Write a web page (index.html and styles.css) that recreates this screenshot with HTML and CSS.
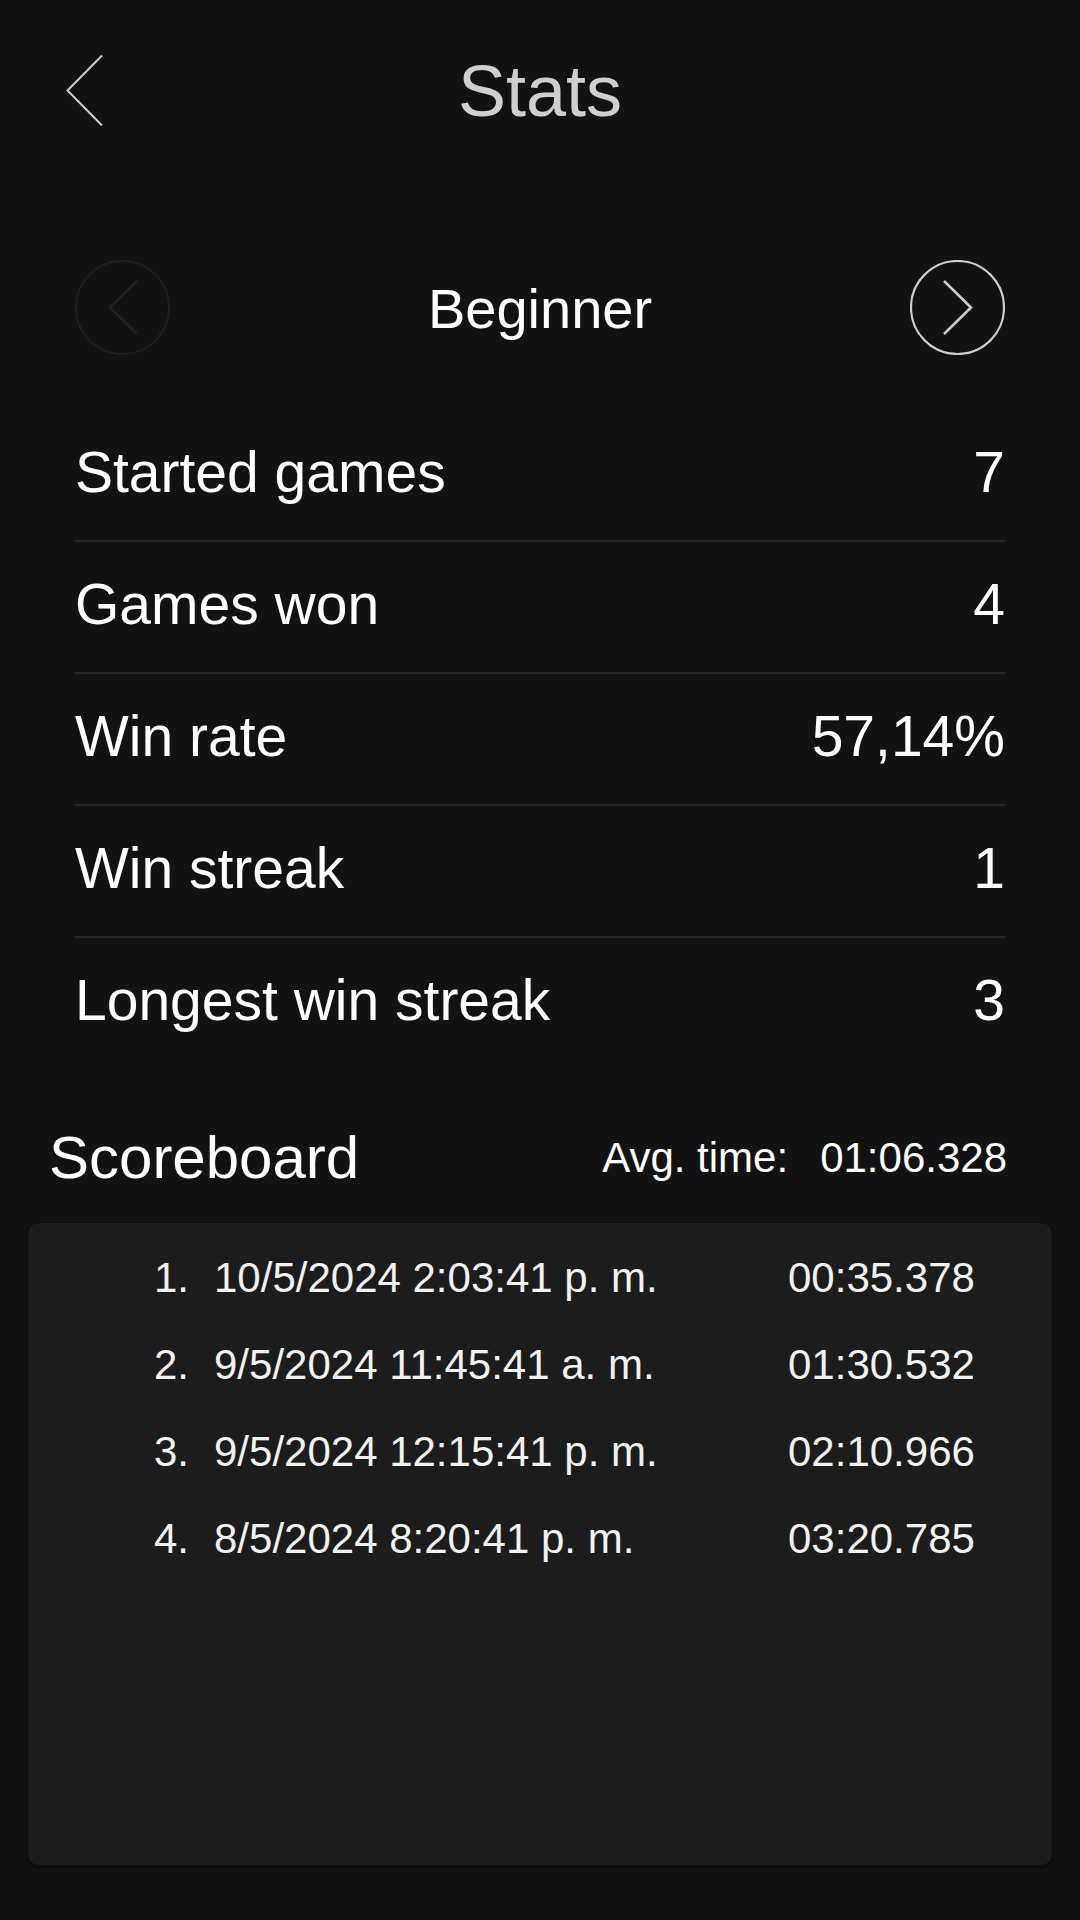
FILE: index.html
```html
<!DOCTYPE html>
<html lang="en">
<head>
<meta charset="utf-8">
<title>Stats</title>
<link rel="stylesheet" href="styles.css">
</head>
<body>
<div class="screen">
  <header class="topbar">
    <div class="topbar-left">
      <svg class="back" width="37" height="71" viewBox="0 0 37 71" aria-label="Back">
        <path d="M36 0.5 L1.5 35.5 L36 70.5" fill="none" stroke="#cfcfcf" stroke-width="2"/>
      </svg>
    </div>
    <h1 class="title">Stats</h1>
    <div class="topbar-right"></div>
  </header>

  <main class="content">
    <div class="level-nav">
      <button class="circle-btn disabled" aria-label="Previous">
        <svg width="95" height="95" viewBox="0 0 95 95">
          <circle cx="47.5" cy="47.5" r="46.5" fill="none" stroke="#1f1f1f" stroke-width="2"/>
          <path d="M62 21 L35 47.5 L62 74" fill="none" stroke="#222222" stroke-width="2.5"/>
        </svg>
      </button>
      <div class="level-name">Beginner</div>
      <button class="circle-btn" aria-label="Next">
        <svg width="95" height="95" viewBox="0 0 95 95">
          <circle cx="47.5" cy="47.5" r="46.5" fill="none" stroke="#cfcfcf" stroke-width="2.2"/>
          <path d="M34 21 L61 47.5 L34 74" fill="none" stroke="#cfcfcf" stroke-width="2.5"/>
        </svg>
      </button>
    </div>

    <ul class="stats">
      <li class="stat-row"><span>Started games</span><span>7</span></li>
      <li class="stat-row"><span>Games won</span><span>4</span></li>
      <li class="stat-row"><span>Win rate</span><span>57,14%</span></li>
      <li class="stat-row"><span>Win streak</span><span>1</span></li>
      <li class="stat-row"><span>Longest win streak</span><span>3</span></li>
    </ul>
  </main>

  <section class="scoreboard">
    <div class="score-head">
      <h2 class="score-title">Scoreboard</h2>
      <div class="avg"><span class="avg-label">Avg. time:</span><span class="avg-value">01:06.328</span></div>
    </div>
    <div class="score-card">
      <div class="score-row"><span class="rank">1.</span><span class="date">10/5/2024 2:03:41 p. m.</span><span class="time">00:35.378</span></div>
      <div class="score-row"><span class="rank">2.</span><span class="date">9/5/2024 11:45:41 a. m.</span><span class="time">01:30.532</span></div>
      <div class="score-row"><span class="rank">3.</span><span class="date">9/5/2024 12:15:41 p. m.</span><span class="time">02:10.966</span></div>
      <div class="score-row"><span class="rank">4.</span><span class="date">8/5/2024 8:20:41 p. m.</span><span class="time">03:20.785</span></div>
    </div>
  </section>
</div>
</body>
</html>
```

FILE: styles.css
```css
* { box-sizing: border-box; }

html, body {
  margin: 0;
  padding: 0;
  background: #121212;
}

body {
  font-family: "Liberation Sans", Arial, sans-serif;
  color: #ffffff;
  width: 1080px;
  height: 1920px;
  overflow: hidden;
}

.screen {
  display: flex;
  flex-direction: column;
  height: 1920px;
}

.topbar {
  display: grid;
  grid-template-columns: 1fr auto 1fr;
  align-items: start;
  padding-top: 55px;
}

.topbar-left {
  padding-left: 66px;
}

.back {
  display: block;
}

.title {
  margin: 0;
  font-size: 72px;
  line-height: 72px;
  font-weight: 400;
  color: #cfcfcf;
}

.content {
  padding: 0 75px;
}

.level-nav {
  margin-top: 133px;
  display: flex;
  align-items: center;
  justify-content: space-between;
}

.circle-btn {
  width: 95px;
  height: 95px;
  padding: 0;
  margin: 0;
  border: none;
  background: none;
}

.circle-btn svg {
  display: block;
}

.level-name {
  font-size: 56px;
  line-height: 64px;
  color: #ffffff;
  padding-top: 2px;
}

.stats {
  list-style: none;
  margin: 55px 0 0;
  padding: 0;
}

.stat-row {
  display: flex;
  justify-content: space-between;
  font-size: 57px;
  line-height: 64px;
  padding: 30px 0 36px;
  border-bottom: 2px solid #252525;
}

.stat-row:last-child {
  border-bottom: none;
}

.scoreboard {
  display: flex;
  flex-direction: column;
  flex: 1;
}

.score-head {
  margin-top: 55px;
  display: flex;
  align-items: center;
  justify-content: space-between;
  padding: 0 73px 0 49px;
  height: 70px;
}

.score-title {
  margin: 0;
  font-size: 60px;
  line-height: 70px;
  font-weight: 400;
}

.avg {
  display: flex;
  gap: 32px;
  font-size: 42px;
  line-height: 70px;
}

.score-card {
  margin: 29px 27px 54px 27px;
  flex: 1;
  background: #1c1c1c;
  border: 1px solid #0d0d0d;
  border-radius: 12px;
  box-shadow: 0 2px 3px rgba(0, 0, 0, 0.45);
  padding: 11px 0 0 126px;
}

.score-row {
  display: grid;
  grid-template-columns: 60px 574px auto;
  font-size: 42px;
  line-height: 87px;
  color: #f2f2f2;
}
```
